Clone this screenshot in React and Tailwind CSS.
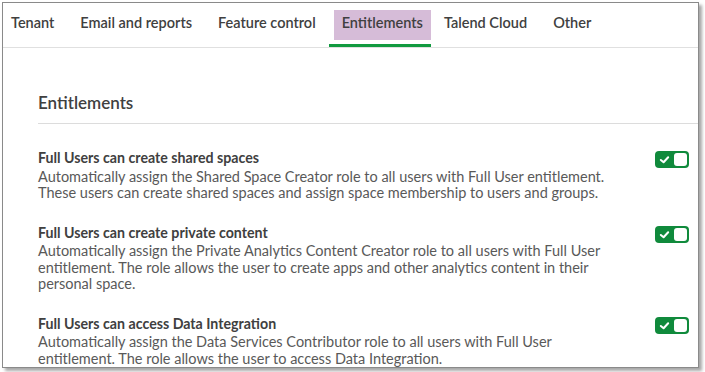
const tabs = ['Tenant', 'Email and reports', 'Feature control', 'Entitlements', 'Talend Cloud', 'Other']

const items = [
  {
    title: 'Full Users can create shared spaces',
    desc: 'Automatically assign the Shared Space Creator role to all users with Full User entitlement. These users can create shared spaces and assign space membership to users and groups.'
  },
  {
    title: 'Full Users can create private content',
    desc: 'Automatically assign the Private Analytics Content Creator role to all users with Full User entitlement. The role allows the user to create apps and other analytics content in their personal space.'
  },
  {
    title: 'Full Users can access Data Integration',
    desc: 'Automatically assign the Data Services Contributor role to all users with Full User entitlement. The role allows the user to access Data Integration.'
  }
]

const Toggle = () => (
  <div className="flex h-[17px] w-[34px] items-center rounded-[4px] bg-[#108a3c] px-[2px]">
    <svg viewBox="0 0 12 12" className="ml-[2px] h-[11px] w-[11px]">
      <path d="M2 6.5 L5 9 L10 3.5" fill="none" stroke="white" strokeWidth="2.2" strokeLinecap="round" strokeLinejoin="round" />
    </svg>
    <div className="ml-auto h-[13px] w-[13px] rounded-[3px] bg-white"></div>
  </div>
)

const App = () => {
  return (
    <div className="h-[372px] w-[705px] overflow-hidden bg-white pl-[2px] pt-[2px]" style={{ fontFamily: 'Lato, "Open Sans", sans-serif' }}>
      <div className="h-[366px] w-[697px] overflow-hidden border border-[#8a8a8a] bg-white shadow-[3px_3px_3px_rgba(0,0,0,0.35)]">
        {/* Tabs */}
        <div className="flex h-[45px] items-stretch border-b border-[#e0e0e0]">
          {tabs.map((tab, i) => {
            const active = tab === 'Entitlements'
            const pad = i === 0 ? 'pl-[8px] pr-[13px]' : active ? 'pl-[5px] pr-0' : 'px-[13px]'
            return (
              <div key={tab} className={`flex items-start pt-[7px] ${pad} ${active ? 'border-b-[3px] border-[#119a3f]' : ''}`}>
                <span
                  className={`flex h-[30px] items-center pb-[5px] text-[14.5px] font-semibold text-[#404040] ${active ? 'bg-[#d6bcd8] px-[8px]' : ''}`}
                >
                  {tab}
                </span>
              </div>
            )
          })}
        </div>

        {/* Section */}
        <div className="pl-[35px]">
          <div className="flex h-[76px] items-end border-b border-[#dcdcdc] pb-[8px] text-[17px] font-semibold text-[#404040]">
            Entitlements
          </div>
          <div className="flex flex-col gap-[23px] pt-[26px] pr-[9px]">
            {items.map((item) => (
              <div key={item.title} className="flex items-start justify-between">
                <div className="max-w-[580px] text-[14.5px] leading-[16.5px]">
                  <div className="mb-[2px] text-[14.2px] font-bold text-[#404040]">{item.title}</div>
                  <div className="text-[#595959]">{item.desc}</div>
                </div>
                <div className="pt-[1px]">
                  <Toggle />
                </div>
              </div>
            ))}
          </div>
        </div>
      </div>
    </div>
  )
}

export default App
